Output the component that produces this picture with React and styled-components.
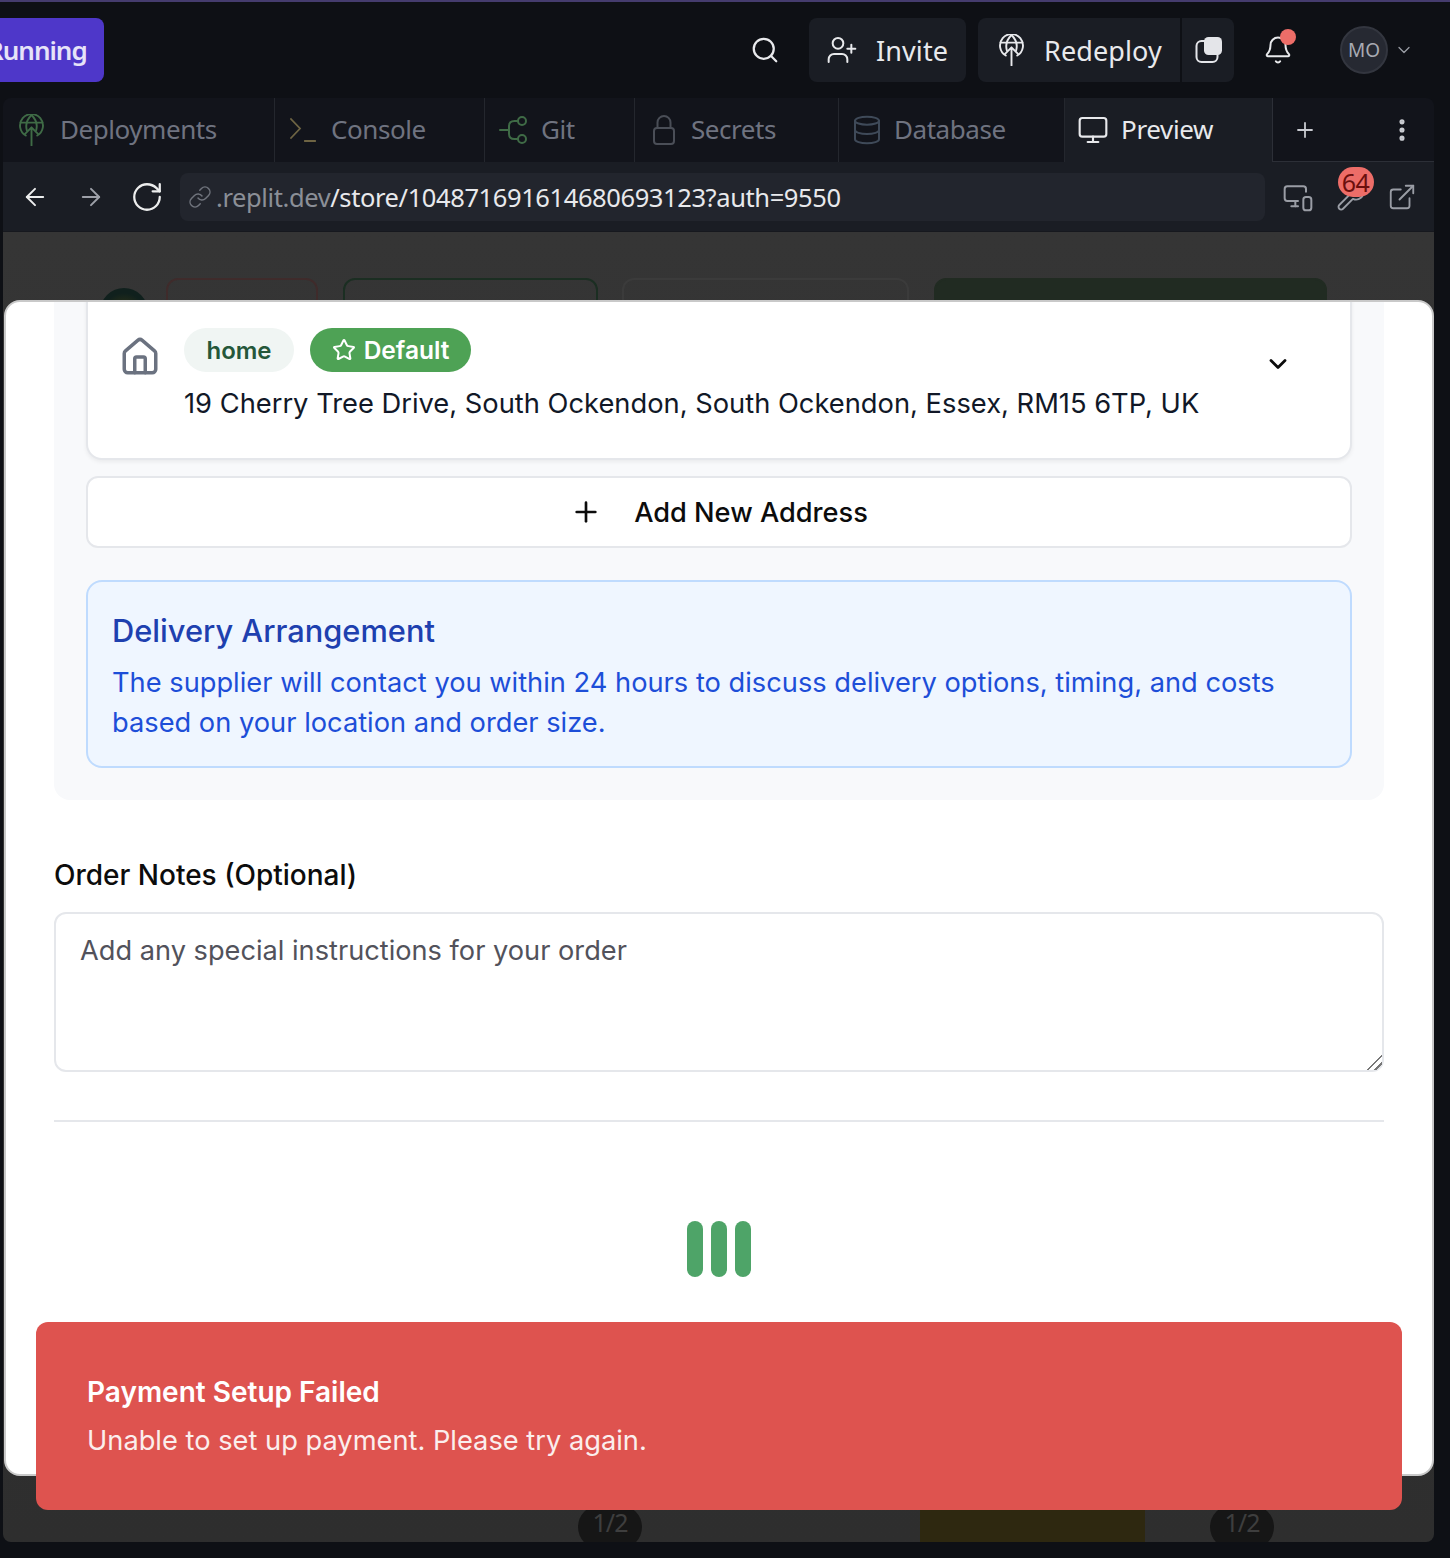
import React from "react";
import styled, { createGlobalStyle } from "styled-components";
import {
  ArrowLeft,
  ArrowRight,
  Bell,
  ChevronDown,
  Database,
  EllipsisVertical,
  ExternalLink,
  Home,
  Link,
  Monitor,
  MonitorSmartphone,
  Plus,
  RotateCw,
  Search,
  Star,
  UserPlus,
  Wrench,
} from "lucide-react";

const GlobalStyle = createGlobalStyle`
  html, body {
    margin: 0;
    background: #0e1015;
  }
  * {
    box-sizing: border-box;
  }
`;

const GlobeArrow = ({ size = 26 }) => (
  <svg width={size} height={size * 1.3} viewBox="0 0 26 34" fill="none" stroke="currentColor" strokeWidth="2" strokeLinecap="round" strokeLinejoin="round">
    <path d="M7 22.500A12 12 0 1 1 19 22.500" />
    <path d="M1.500 9h23" />
    <path d="M13 1C9 5 7.500 9 7.500 12.500c0 1.500.2 3 .6 4.500" />
    <path d="M13 1c4 4 5.500 8 5.500 11.500 0 1.500-.2 3-.6 4.500" />
    <path d="M13 33V14M6 21l7-7 7 7" />
  </svg>
);

const GitIcon = () => (
  <svg width="30" height="30" viewBox="0 0 30 30" fill="none" stroke="currentColor" strokeWidth="2" strokeLinecap="round">
    <path d="M1 15h9M19 6h-3.500C12 6 10 8 10 11v8c0 3 2 5 5.500 5H19" />
    <circle cx="23" cy="6" r="4" />
    <circle cx="23" cy="24" r="4" />
  </svg>
);

const ConsoleIcon = () => (
  <svg width="26" height="26" viewBox="0 0 26 26" fill="none" stroke="currentColor" strokeWidth="1.800" strokeLinecap="square">
    <path d="M1 2l9 9.500L1 21M15 24h10" />
  </svg>
);

const LockIcon = () => (
  <svg width="22" height="30" viewBox="0 0 22 30" fill="none" stroke="currentColor" strokeWidth="2">
    <rect x="1" y="13" width="20" height="16" rx="3" />
    <path d="M4.500 13V7.500a6.500 6.500 0 0 1 13 0V13" />
  </svg>
);

const CopyIcon = () => (
  <svg width="28" height="28" viewBox="0 0 28 28" fill="none">
    <rect x="1.500" y="5" width="21" height="21" rx="5" stroke="#e4e5e9" strokeWidth="2" />
    <rect x="9" y="1" width="18" height="18" rx="4.500" fill="#e4e5e9" />
  </svg>
);

const tabs = [
  { name: "Deployments", width: 272, pad: 16, gap: 16, tone: "#3f6b46", icon: <GlobeArrow size={25} /> },
  { name: "Console", width: 210, pad: 15, gap: 15, tone: "#6e6443", icon: <ConsoleIcon /> },
  { name: "Git", width: 150, pad: 14, gap: 12, tone: "#3f6b46", icon: <GitIcon /> },
  { name: "Secrets", width: 204, pad: 18, gap: 16, tone: "#4a4e57", icon: <LockIcon /> },
  { name: "Database", width: 226, pad: 12, gap: 11, tone: "#3f4a59", icon: <Database size={32} strokeWidth={1.500} /> },
];

const App = () => {
  return (
    <>
      <GlobalStyle />
      <Page>
        <TopLine />
        <Header>
          <RunButton>Running</RunButton>
          <HeaderRight>
            <SearchButton>
              <Search size={30} strokeWidth={1.800} />
            </SearchButton>
            <DarkButton $width={157}>
              <UserPlus size={32} strokeWidth={1.500} />
              Invite
            </DarkButton>
            <SplitGroup>
              <DarkButton $width={202} $flatRight>
                <GlobeArrow size={25} />
                Redeploy
              </DarkButton>
              <CopyButton>
                <CopyIcon />
              </CopyButton>
            </SplitGroup>
            <BellWrap>
              <Bell size={30} strokeWidth={1.600} />
              <BellDot />
            </BellWrap>
            <Avatar>MO</Avatar>
            <AvatarChevron>
              <ChevronDown size={20} strokeWidth={1.500} />
            </AvatarChevron>
          </HeaderRight>
        </Header>

        <Frame>
          <TabBar>
            {tabs.map((tab) => (
              <Tab key={tab.name} $width={tab.width} $pad={tab.pad} $gap={tab.gap}>
                <TabIcon $tone={tab.tone}>{tab.icon}</TabIcon>
                <TabLabel>{tab.name}</TabLabel>
              </Tab>
            ))}
            <ActiveTab>
              <Monitor size={32} strokeWidth={1.600} />
              <TabLabel>Preview</TabLabel>
            </ActiveTab>
            <TabActions>
              <Plus size={24} strokeWidth={1.800} />
              <EllipsisVertical size={28} strokeWidth={2.400} />
            </TabActions>
          </TabBar>

          <BrowserBar>
            <NavIcon>
              <ArrowLeft size={28} strokeWidth={1.700} />
            </NavIcon>
            <NavIcon $dim>
              <ArrowRight size={28} strokeWidth={1.700} />
            </NavIcon>
            <NavIcon>
              <RotateCw size={34} strokeWidth={1.600} />
            </NavIcon>
            <UrlField>
              <LinkIcon>
                <Link size={24} strokeWidth={1.500} />
              </LinkIcon>
              <UrlHost>.replit.dev</UrlHost>/store/104871691614680693123?auth=9550
            </UrlField>
            <BarTools>
              <ToolIcon>
                <MonitorSmartphone size={32} strokeWidth={1.500} />
              </ToolIcon>
              <ToolIcon>
                <Wrench size={30} strokeWidth={1.500} />
                <CountBadge>64</CountBadge>
              </ToolIcon>
              <ToolIcon>
                <ExternalLink size={30} strokeWidth={1.500} />
              </ToolIcon>
            </BarTools>
          </BrowserBar>

          <Preview>
            <BehindTop>
              <BehindAvatar />
              <BehindChip $width={152} $line="#3f2b2b" />
              <BehindChip $width={255} $line="#1b2e22" />
              <BehindChip $width={287} $line="#3b3b3b" />
              <BehindChip $width={393} $line="#212b22" $fill="#212b22" />
            </BehindTop>
            <BehindBottom>
              <PageBadge>1/2</PageBadge>
              <BehindPhoto />
              <PageBadge>1/2</PageBadge>
            </BehindBottom>

            <Dialog>
              <Section>
                <AddressCard>
                  <HomeIcon>
                    <Home size={42} strokeWidth={2} />
                  </HomeIcon>
                  <AddressBody>
                    <ChipRow>
                      <TypeChip>home</TypeChip>
                      <DefaultChip>
                        <Star size={24} strokeWidth={2} />
                        Default
                      </DefaultChip>
                    </ChipRow>
                    <AddressText>19 Cherry Tree Drive, South Ockendon, South Ockendon, Essex, RM15 6TP, UK</AddressText>
                  </AddressBody>
                  <CardChevron>
                    <ChevronDown size={28} strokeWidth={2.400} />
                  </CardChevron>
                </AddressCard>
                <AddButton>
                  <Plus size={32} strokeWidth={2} />
                  Add New Address
                </AddButton>
                <DeliveryBox>
                  <DeliveryTitle>Delivery Arrangement</DeliveryTitle>
                  <DeliveryText>
                    The supplier will contact you within 24 hours to discuss delivery options, timing, and costs based on your location and order size.
                  </DeliveryText>
                </DeliveryBox>
              </Section>
              <NotesLabel>Order Notes (Optional)</NotesLabel>
              <NotesInput placeholder="Add any special instructions for your order" />
              <Divider />
              <Loader>
                <LoaderBar />
                <LoaderBar />
                <LoaderBar />
              </Loader>
            </Dialog>

            <Toast>
              <ToastTitle>Payment Setup Failed</ToastTitle>
              <ToastText>Unable to set up payment. Please try again.</ToastText>
            </Toast>
          </Preview>
        </Frame>
      </Page>
    </>
  );
};

export default App;

const chromeFont = `"Noto Sans", "Liberation Sans", sans-serif`;
const bodyFont = `Inter, "Liberation Sans", sans-serif`;

const Page = styled.div`
  width: 1450px;
  height: 1558px;
  overflow: hidden;
  background: #0e1015;
  font-family: ${chromeFont};
  display: flex;
  flex-direction: column;
`;

const TopLine = styled.div`
  height: 2px;
  background: #453c6e;
  flex-shrink: 0;
`;

const Header = styled.header`
  height: 96px;
  flex-shrink: 0;
  display: flex;
  align-items: center;
  justify-content: space-between;
`;

const RunButton = styled.div`
  width: 144px;
  height: 64px;
  margin-left: -40px;
  padding-left: 27px;
  border-radius: 8px;
  background: #4e37c9;
  color: #e6e3f8;
  font-size: 26px;
  font-weight: 600;
  letter-spacing: -1px;
  display: flex;
  align-items: center;
  white-space: nowrap;
`;

const HeaderRight = styled.div`
  display: flex;
  align-items: center;
  color: #e8e9ec;
`;

const SearchButton = styled.div`
  width: 30px;
  margin-right: 29px;
  display: flex;
`;

const DarkButton = styled.div`
  width: ${(p) => p.$width}px;
  height: 64px;
  padding-left: 17px;
  display: flex;
  align-items: center;
  gap: 18px;
  background: #1a1d24;
  border-radius: ${(p) => (p.$flatRight ? "8px 0 0 8px" : "8px")};
  font-size: 27px;
  letter-spacing: 0.1px;
  white-space: nowrap;
  & > svg:first-child {
    margin-left: ${(p) => (p.$flatRight ? "4px" : "0")};
    margin-right: ${(p) => (p.$flatRight ? "2px" : "0")};
  }
`;

const SplitGroup = styled.div`
  display: flex;
  margin-left: 12px;
  gap: 2px;
`;

const CopyButton = styled.div`
  width: 52px;
  height: 64px;
  padding-left: 2px;
  background: #1a1d24;
  border-radius: 0 8px 8px 0;
  display: flex;
  align-items: center;
  justify-content: center;
`;

const BellWrap = styled.div`
  position: relative;
  width: 30px;
  height: 30px;
  margin-left: 29px;
`;

const BellDot = styled.span`
  position: absolute;
  top: -6px;
  right: -3px;
  width: 16px;
  height: 16px;
  border-radius: 50%;
  background: #ed6d68;
`;

const Avatar = styled.div`
  width: 48px;
  height: 48px;
  margin-left: 47px;
  border-radius: 50%;
  background: #262932;
  border: 2px solid #33363f;
  color: #a8abb3;
  font-size: 19px;
  display: flex;
  align-items: center;
  justify-content: center;
`;

const AvatarChevron = styled.div`
  display: flex;
  margin-left: 6px;
  margin-right: 36px;
  color: #9b9ea6;
`;

const Frame = styled.div`
  width: 1431px;
  margin-left: 3px;
  height: 1444px;
  display: flex;
  flex-direction: column;
  border-radius: 0 0 8px 8px;
  overflow: hidden;
`;

const TabBar = styled.nav`
  height: 64px;
  flex-shrink: 0;
  display: flex;
  background: #12141b;
  border-radius: 8px 8px 0 0;
`;

const Tab = styled.div`
  width: ${(p) => p.$width}px;
  padding-left: ${(p) => p.$pad}px;
  gap: ${(p) => p.$gap}px;
  display: flex;
  align-items: center;
  border-right: 1px solid #24272e;
  color: #6f7380;
  font-size: 26px;
  letter-spacing: -0.45px;
`;

const TabLabel = styled.span`
  padding-bottom: 2px;
`;

const TabIcon = styled.span`
  display: flex;
  color: ${(p) => p.$tone};
`;

const ActiveTab = styled.div`
  width: 207px;
  padding-left: 12px;
  display: flex;
  align-items: center;
  gap: 12px;
  background: #1a1d24;
  color: #e8e9ec;
  font-size: 26px;
  letter-spacing: -0.35px;
`;

const TabActions = styled.div`
  flex: 1;
  display: flex;
  align-items: center;
  justify-content: space-between;
  padding: 0 18px 0 20px;
  color: #c9cbd1;
  border-left: 1px solid #2c2f37;
  border-bottom: 1px solid #2c2f37;
`;

const BrowserBar = styled.div`
  height: 70px;
  flex-shrink: 0;
  display: flex;
  align-items: center;
  padding-left: 4px;
  background: #1a1d24;
  border-bottom: 1px solid #16181e;
`;

const NavIcon = styled.div`
  display: flex;
  width: 56px;
  justify-content: center;
  color: ${(p) => (p.$dim ? "#9da0a8" : "#eceded")};
`;

const UrlField = styled.div`
  width: 1085px;
  height: 48px;
  margin-left: 5px;
  padding-left: 8px;
  display: flex;
  align-items: center;
  white-space: pre;
  border-radius: 8px;
  background: #22252d;
  color: #e8e9ec;
  font-size: 25.500px;
  letter-spacing: -0.4px;
`;

const LinkIcon = styled.span`
  display: flex;
  margin-right: 4px;
  color: #70747d;
`;

const UrlHost = styled.span`
  color: #8b8f97;
`;

const BarTools = styled.div`
  flex: 1;
  display: flex;
  align-items: center;
  justify-content: space-between;
  padding: 0 17px;
`;

const ToolIcon = styled.div`
  position: relative;
  display: flex;
  color: #9a9da5;
`;

const CountBadge = styled.span`
  position: absolute;
  top: -15px;
  left: 2px;
  width: 36px;
  height: 30px;
  border-radius: 15px;
  background: #ed6d68;
  color: #6b0f0d;
  font-size: 25px;
  line-height: 30px;
  letter-spacing: -0.5px;
  text-align: center;
`;

const Preview = styled.main`
  position: relative;
  flex: 1;
  display: flex;
  flex-direction: column;
  justify-content: space-between;
  overflow: hidden;
  background: linear-gradient(#353535, #2e2e2e);
`;

const BehindTop = styled.div`
  display: flex;
  align-items: flex-start;
  padding: 46px 0 0 97px;
  gap: 24.700px;
`;

const BehindAvatar = styled.div`
  width: 48px;
  height: 48px;
  margin-top: 10px;
  margin-right: -6.700px;
  border-radius: 50%;
  background: radial-gradient(circle at 50% 55%, #3a3a14, #10201d 60%);
`;

const BehindChip = styled.div`
  width: ${(p) => p.$width}px;
  height: 60px;
  border-radius: 12px;
  border: 2px solid ${(p) => p.$line};
  background: ${(p) => p.$fill || "transparent"};
`;

const BehindBottom = styled.div`
  height: 37px;
  display: flex;
  align-items: flex-start;
  padding-left: 575px;
`;

const PageBadge = styled.div`
  width: 64px;
  height: 44px;
  border-radius: 22px;
  background: #161616;
  color: #3e3e3e;
  font-size: 25px;
  letter-spacing: -1px;
  text-align: center;
  line-height: 34px;
`;

const BehindPhoto = styled.div`
  width: 225px;
  height: 37px;
  margin: 0 65px 0 278px;
  background: #2e2810;
`;

const Dialog = styled.div`
  position: absolute;
  top: 68px;
  left: 1px;
  width: 1430px;
  height: 1176px;
  padding: 0 48px;
  overflow: hidden;
  background: #fff;
  border: 2px solid #c9c9c9;
  border-radius: 16px;
  font-family: ${bodyFont};
`;

const Section = styled.section`
  margin-top: -22px;
  padding: 0 32px 32px;
  background: #f8f9fb;
  border-radius: 0 0 16px 16px;
`;

const AddressCard = styled.div`
  height: 180px;
  padding: 46px 0 0 31px;
  display: flex;
  align-items: flex-start;
  background: #fff;
  border: 2px solid #e5e7eb;
  border-radius: 16px;
  box-shadow: 0 2px 4px rgba(0, 0, 0, 0.06);
`;

const HomeIcon = styled.div`
  display: flex;
  margin-top: 8px;
  color: #6b7280;
`;

const AddressBody = styled.div`
  margin-left: 23px;
  flex: 1;
`;

const ChipRow = styled.div`
  display: flex;
  gap: 16px;
`;

const TypeChip = styled.span`
  width: 110px;
  height: 44px;
  border-radius: 22px;
  background: #f0f5f3;
  color: #25573a;
  font-size: 24px;
  font-weight: 600;
  display: flex;
  align-items: center;
  justify-content: center;
`;

const DefaultChip = styled.span`
  width: 161px;
  height: 44px;
  border-radius: 22px;
  background: #4ea255;
  color: #fff;
  font-size: 24.500px;
  font-weight: 600;
  display: flex;
  align-items: center;
  justify-content: center;
  gap: 8px;
`;

const AddressText = styled.p`
  margin: 12px 0 0;
  color: #111827;
  font-size: 27.300px;
  line-height: 40px;
  white-space: nowrap;
`;

const CardChevron = styled.div`
  display: flex;
  margin: 22px 58px 0 0;
  color: #0c0c0c;
`;

const AddButton = styled.div`
  height: 72px;
  margin-top: 16px;
  display: flex;
  align-items: center;
  justify-content: center;
  gap: 32px;
  background: #fff;
  border: 2px solid #e5e7eb;
  border-radius: 12px;
  color: #0c0c0c;
  font-size: 27.200px;
  font-weight: 500;
`;

const DeliveryBox = styled.div`
  height: 188px;
  margin-top: 32px;
  padding: 27px 24px 0;
  background: #eff6ff;
  border: 2px solid #bfdbfe;
  border-radius: 16px;
`;

const DeliveryTitle = styled.h3`
  margin: 0;
  color: #1e40af;
  font-size: 30.800px;
  line-height: 44px;
  font-weight: 500;
`;

const DeliveryText = styled.p`
  margin: 10px 0 0;
  color: #1d4ed8;
  font-size: 27.250px;
  line-height: 40px;
`;

const NotesLabel = styled.div`
  margin-top: 55px;
  color: #0c0c0c;
  font-size: 28px;
  line-height: 40px;
  font-weight: 500;
`;

const NotesInput = styled.textarea`
  display: block;
  width: 100%;
  height: 160px;
  margin-top: 17px;
  padding: 17px 24px;
  background: #fff;
  border: 2px solid #e5e7eb;
  border-radius: 12px;
  font-family: ${bodyFont};
  font-size: 27.200px;
  line-height: 40px;
  &::placeholder {
    color: #52525b;
    opacity: 1;
  }
  &::-webkit-resizer {
    background: linear-gradient(135deg, transparent 47%, #777 47% 55%, transparent 55% 72%, #777 72% 80%, transparent 80%);
  }
`;

const Divider = styled.hr`
  height: 2px;
  margin: 48px 0 0;
  border: 0;
  background: #e5e7eb;
`;

const Loader = styled.div`
  margin-top: 99px;
  display: flex;
  justify-content: center;
  gap: 8px;
`;

const LoaderBar = styled.span`
  width: 16px;
  height: 56px;
  border-radius: 8px;
  background: #4ea468;
`;

const Toast = styled.div`
  position: absolute;
  top: 1090px;
  left: 33px;
  width: 1366px;
  height: 188px;
  padding: 50px 51px 0;
  background: #de534f;
  border-radius: 12px;
  color: #fff;
  font-family: ${bodyFont};
  font-size: 28px;
`;

const ToastTitle = styled.div`
  line-height: 40px;
  font-weight: 600;
`;

const ToastText = styled.div`
  margin-top: 9px;
  font-size: 27.250px;
  line-height: 40px;
  opacity: 0.9;
`;
